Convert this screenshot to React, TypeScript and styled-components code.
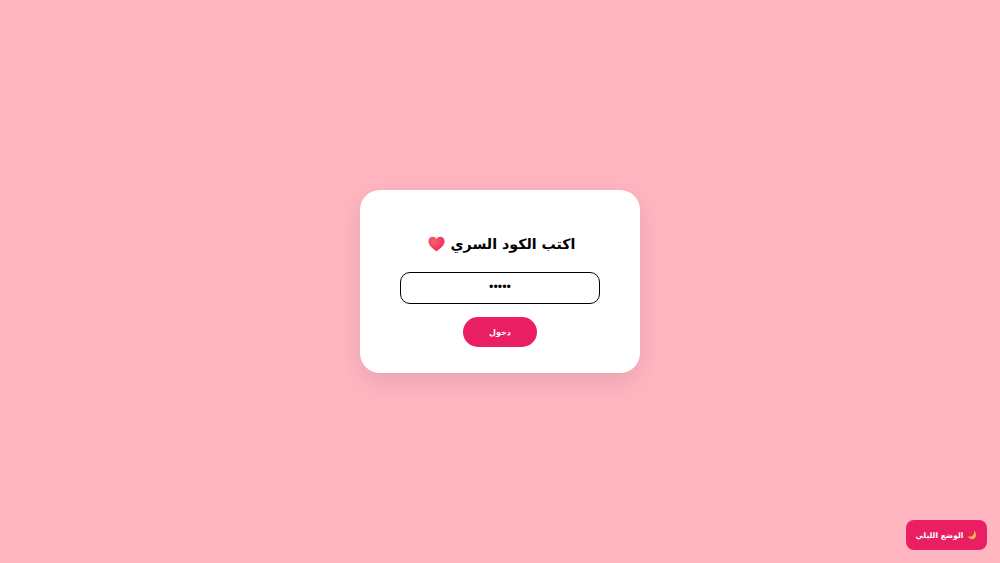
import React, { useState } from 'react';
import styled, { createGlobalStyle } from 'styled-components';

const GlobalStyle = createGlobalStyle`
  html, body { margin: 0; padding: 0; height: 100%; }
  body {
    background: #ffb6c1;
    font-family: "DejaVu Sans", "Noto Sans", sans-serif;
  }
`;

const Page = styled.div`
  min-height: 100vh;
  display: flex;
  align-items: center;
  justify-content: center;
`;

const Card = styled.form`
  width: 280px;
  height: 183px;
  box-sizing: border-box;
  padding: 40px 40px 26px;
  background: #fff;
  border-radius: 20px;
  box-shadow: 0 8px 24px rgba(0, 0, 0, 0.1);
  display: flex;
  flex-direction: column;
  align-items: center;
`;

const Title = styled.h2`
  margin: 0 0 14px 3px;
  height: 28px;
  display: flex;
  align-items: center;
  gap: 6px;
  font-size: 14.2px;
  line-height: 28px;
  font-weight: 700;
  color: #000;
  white-space: nowrap;
`;

const CodeInput = styled.input`
  width: 200px;
  height: 32px;
  box-sizing: border-box;
  padding: 0 10px 2px;
  border: 1px solid #000;
  border-radius: 10px;
  background: #fff;
  color: #000;
  font-size: 12.5px;
  font-family: "Liberation Sans", sans-serif;
  text-align: center;
  outline: none;
`;

const Submit = styled.button`
  margin-top: 13px;
  width: 74px;
  height: 30px;
  border: 0;
  border-radius: 15px;
  background: #e91e63;
  color: #fff;
  font-family: inherit;
  font-size: 8px;
  font-weight: 700;
  cursor: pointer;
`;

const NightToggle = styled.button`
  position: fixed;
  right: 13px;
  bottom: 13px;
  width: 81px;
  height: 30px;
  padding: 0;
  border: 0;
  border-radius: 8px;
  background: #e91e63;
  color: #fff;
  font-family: inherit;
  font-size: 7.6px;
  font-weight: 700;
  display: flex;
  align-items: center;
  justify-content: center;
  gap: 4px;
  white-space: nowrap;
  cursor: pointer;
`;

const Heart = () => (
  <svg width="17" height="16" viewBox="0 0 17 16" aria-hidden="true">
    <defs>
      <radialGradient id="heartFill" cx="0.35" cy="0.3" r="0.85">
        <stop offset="0" stopColor="#f9606a" />
        <stop offset="0.6" stopColor="#f23a62" />
        <stop offset="1" stopColor="#ee2f8c" />
      </radialGradient>
    </defs>
    <path
      d="M8.500 15.500C6 13.300.4 10 .4 5.300.4 2.700 2.400.8 4.700.8c1.600 0 3 .8 3.800 2.300C9.300 1.600 10.700.8 12.300.8c2.300 0 4.300 1.900 4.300 4.500 0 4.700-5.600 8-8.100 10.200z"
      fill="url(#heartFill)"
    />
  </svg>
);

const Moon = () => (
  <svg width="10" height="10" viewBox="0 0 10 10" aria-hidden="true">
    <path d="M6.800.5C7.600 3 6.700 5.300 4.800 6.300 3.400 7 2 6.900.7 6.300 1.800 8.500 4.300 9.700 6.500 9c3-1 3.500-6.200.3-8.500z" fill="#f7b54a" />
  </svg>
);

export default function App() {
  const [code, setCode] = useState('12345');

  return (
    <>
      <GlobalStyle />
      <Page dir="rtl">
        <Card onSubmit={(e) => e.preventDefault()}>
          <Title>
            <span>اكتب الكود السري</span>
            <Heart />
          </Title>
          <CodeInput type="password" value={code} onChange={(e) => setCode(e.target.value)} />
          <Submit type="submit">دخول</Submit>
        </Card>
        <NightToggle type="button">
          <Moon />
          <span>الوضع الليلي</span>
        </NightToggle>
      </Page>
    </>
  );
}
